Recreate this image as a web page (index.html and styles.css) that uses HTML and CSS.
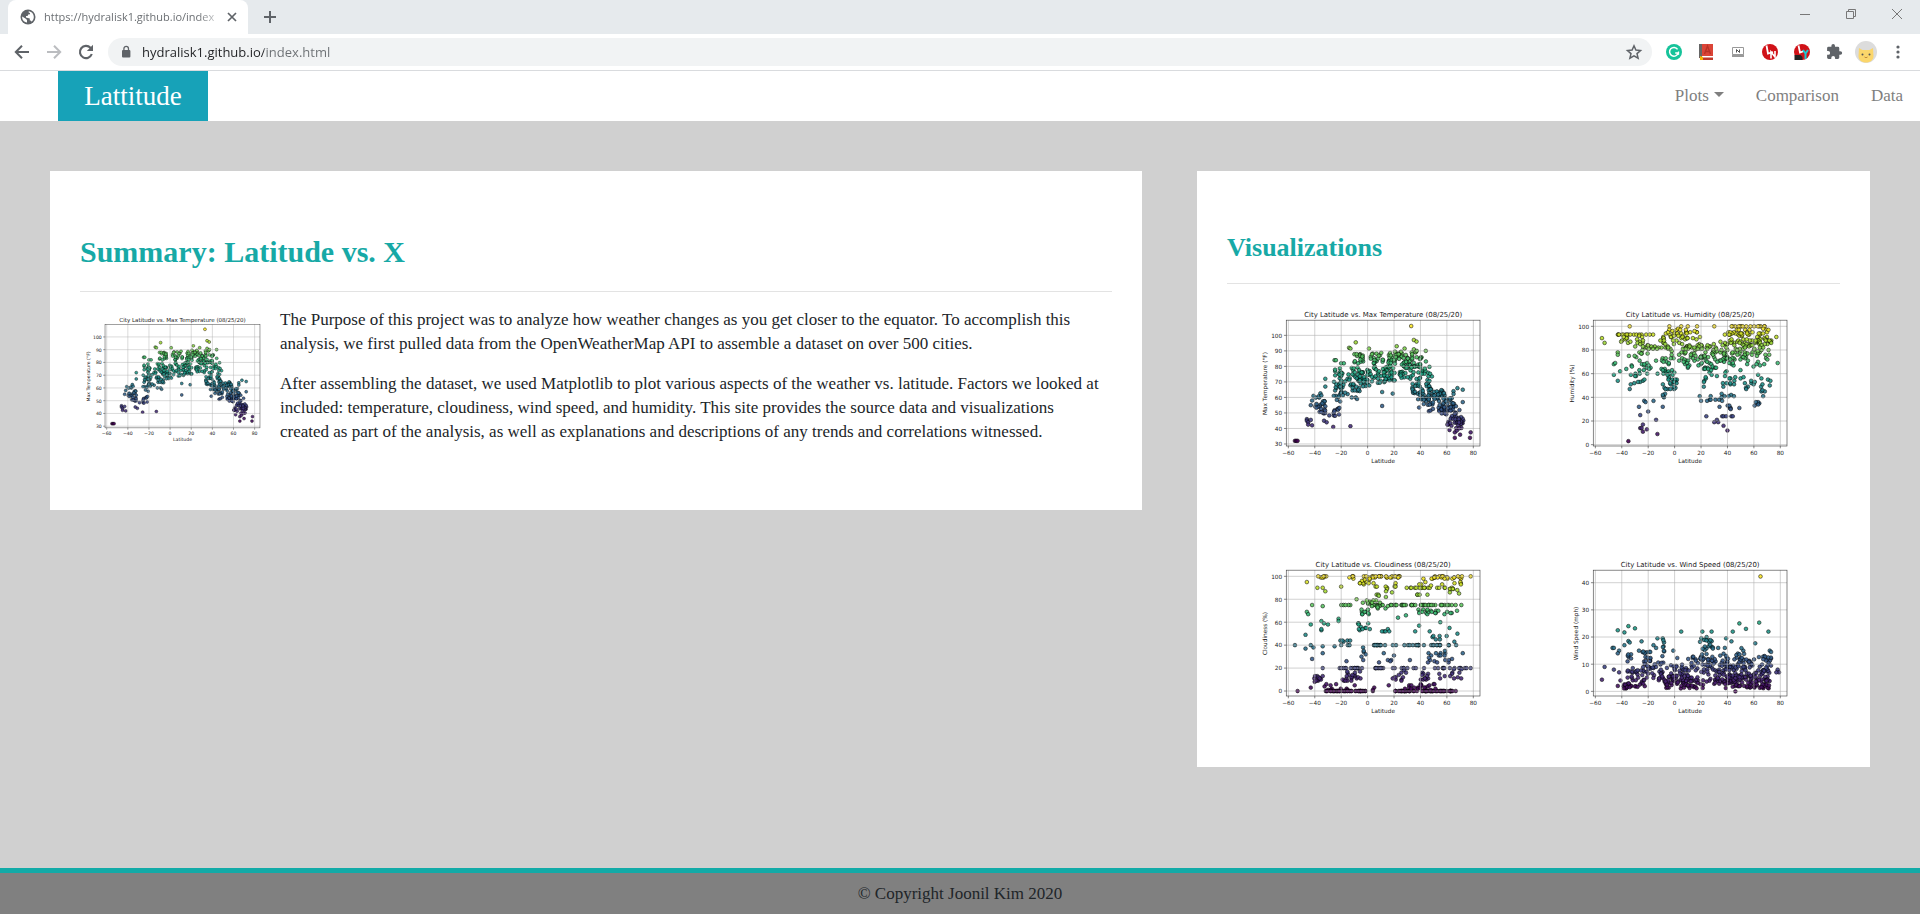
FILE: index.html
```html
<!DOCTYPE html>
<html lang="en">
<head>
<meta charset="utf-8">
<title>Latitude</title>
<link rel="stylesheet" href="styles.css">
</head>
<body>
<div class="browser">
  <div class="tabstrip">
    <div class="tab">
      <svg class="globe" viewBox="0 0 16 16"><circle cx="8" cy="8" r="7.5" fill="#5f6368"/><path d="M2.2 7.6 5.8 9.8 7 11v2.6C3.800 13.200 1.900 10.700 2.200 7.600zM8.700 2.200C12 2.600 14 5.200 13.800 8.500c-.2 1.800-1 3.200-2.200 4.200-.2-1-.8-1.200-1.800-1.300V9.400L6 8.600V7h1.600L8.200 5.600 10 5.200V4L8.700 3.600z" fill="#fff"/></svg>
      <span class="tab-title">https://hydralisk1.github.io/index</span>
      <button class="icon-btn small" aria-label="Close tab"><svg viewBox="0 0 14 14"><path d="M3 3l8 8M11 3l-8 8" stroke="#5f6368" stroke-width="1.7" fill="none"/></svg></button>
    </div>
    <button class="icon-btn newtab" aria-label="New tab"><svg viewBox="0 0 20 20"><path d="M10 4v12M4 10h12" stroke="#5f6368" stroke-width="2" fill="none"/></svg></button>
    <div class="window-controls">
      <button class="icon-btn" aria-label="Minimize"><svg viewBox="0 0 20 20"><path d="M5 10.500h10" stroke="#777" fill="none"/></svg></button>
      <button class="icon-btn" aria-label="Restore"><svg viewBox="0 0 20 20"><path d="M5.500 7.500h7v7h-7zM7.500 7.500v-2h7v7h-2" stroke="#777" fill="none"/></svg></button>
      <button class="icon-btn" aria-label="Close"><svg viewBox="0 0 20 20"><path d="M5 5l10 10M15 5L5 15" stroke="#777" fill="none"/></svg></button>
    </div>
  </div>
  <div class="toolbar">
    <button class="icon-btn" aria-label="Back"><svg viewBox="0 0 20 20"><path d="M17 10H4.500M10 3.800 3.800 10l6.200 6.200" stroke="#5f6368" stroke-width="2" fill="none"/></svg></button>
    <button class="icon-btn" aria-label="Forward"><svg viewBox="0 0 20 20"><path d="M3 10h12.500M10 3.800l6.200 6.200-6.200 6.200" stroke="#bbbdc0" stroke-width="2" fill="none"/></svg></button>
    <button class="icon-btn" aria-label="Reload"><svg viewBox="0 0 20 20"><path d="M15.800 12a6.100 6.100 0 1 1-1.300-6.200l1.200 1.200" stroke="#5f6368" stroke-width="2.100" fill="none"/><path d="M17 2.800v6.200h-6.200z" fill="#5f6368"/></svg></button>
    <div class="omnibox">
      <svg class="lock" viewBox="0 0 12 14"><rect x="2" y="5" width="8.400" height="7.500" rx="1" fill="#5f6368"/><path d="M3.900 5.500V3.700a2.300 2.300 0 0 1 4.600 0v1.800" stroke="#5f6368" stroke-width="1.300" fill="none"/></svg>
      <input class="url" type="text" aria-label="Address" value="hydralisk1.github.io/index.html">
      <button class="icon-btn" aria-label="Bookmark"><svg viewBox="0 0 20 20"><path d="M10 3.800l1.900 4.300 4.600.4-3.500 3.100 1.100 4.600L10 13.800l-4.100 2.400L7 11.600 3.500 8.500l4.600-.4z" stroke="#5f6368" stroke-width="1.500" fill="none"/></svg></button>
    </div>
    <button class="icon-btn" aria-label="Writing assistant"><svg viewBox="0 0 20 20"><circle cx="10" cy="10" r="8" fill="#15c39a"/><path d="M13.600 7.300A4.400 4.400 0 1 0 14.200 11h-3" stroke="#fff" stroke-width="1.500" fill="none"/><path d="M14.500 9.500v3.300" stroke="#fff" stroke-width="1.300"/></svg></button>
    <button class="icon-btn" aria-label="Dictionary"><svg viewBox="0 0 20 20"><path d="M3 2h3v14H3z" fill="#666"/><path d="M6 2h11v12H6z" fill="#db4437"/><path d="M6 14h11v1H6z" fill="#fff"/><path d="M3.500 15.500H17V18H5z" fill="#c0392b"/><path d="M8.500 12l3-8 3 8M9.500 9.500h4" stroke="#b93226" stroke-width="1.400" fill="none"/><path d="M4 14l3 1v3H4z" fill="#f4b400"/></svg></button>
    <button class="icon-btn" aria-label="Keyboard"><svg viewBox="0 0 20 20"><path d="M4.500 5.500h11v7h-11z" stroke="#999" fill="#fff"/><path d="M4 12.500h12v2.500H4z" fill="#999"/><path d="M8.500 10.500V7.500l3 3V7.500" stroke="#555" fill="none"/></svg></button>
    <button class="icon-btn" aria-label="Language tool"><svg viewBox="0 0 20 20"><circle cx="10" cy="10" r="8" fill="#d01218"/><path d="M6.500 3.500l1.500 8 5-1.500" stroke="#fff" stroke-width="1.800" fill="none"/><path d="M11 16.500V10l4 5V9" stroke="#fff" stroke-width="1.600" fill="none"/></svg></button>
    <button class="icon-btn" aria-label="Language video tool"><svg viewBox="0 0 20 20"><circle cx="10" cy="10" r="8" fill="#d01218"/><path d="M6.500 3.500l1.500 7 4-1.500" stroke="#fff" stroke-width="1.800" fill="none"/><path d="M2.500 13h6l2 2v3H2.500z" fill="#222"/><path d="M11 8l2.500 3.500L16 8M13.500 11.500V17" stroke="#19c8cf" stroke-width="2" fill="none"/></svg></button>
    <button class="icon-btn" aria-label="Extensions"><svg viewBox="0 0 24 24"><path d="M20.500 11H19V7a2 2 0 0 0-2-2h-4V3.500a2.500 2.500 0 0 0-5 0V5H4a2 2 0 0 0-2 2v3.800h1.500a2.700 2.700 0 0 1 0 5.400H2V20a2 2 0 0 0 2 2h3.800v-1.500a2.700 2.700 0 0 1 5.400 0V22H17a2 2 0 0 0 2-2v-4h1.500a2.500 2.500 0 0 0 0-5z" transform="translate(2 1.500) scale(.86)" fill="#5f6368"/></svg></button>
    <button class="icon-btn avatar" aria-label="Profile"><svg viewBox="0 0 22 22"><circle cx="11" cy="11" r="11" fill="#dcdcdc"/><path d="M4 7l3.500 2h7L18 7l.5 8c0 4-3 6.500-7.500 6.500S3.500 19 3.500 15z" fill="#fbd66b"/><circle cx="7.500" cy="13.500" r="1" fill="#555"/><circle cx="14.500" cy="13.500" r="1" fill="#555"/><path d="M9.500 16q1.500 1.500 3 0" stroke="#c0893a" fill="none"/></svg></button>
    <button class="icon-btn" aria-label="Menu"><svg viewBox="0 0 20 20"><g fill="#5f6368"><circle cx="10" cy="5" r="1.600"/><circle cx="10" cy="10" r="1.600"/><circle cx="10" cy="15" r="1.600"/></g></svg></button>
  </div>
</div>

<nav class="navbar">
  <a class="brand" href="#">Lattitude</a>
  <div class="links">
    <button class="nav-link dropdown">Plots</button>
    <a class="nav-link" href="#">Comparison</a>
    <a class="nav-link" href="#">Data</a>
  </div>
</nav>

<main class="content">
  <section class="card">
    <h1 class="title">Summary: Latitude vs. X</h1>
    <hr class="rule">
    <div class="summary">
      <svg class="chart thumb" data-chart="temperature" viewBox="0 0 432 296"></svg>
      <div class="text">
        <p>The Purpose of this project was to analyze how weather changes as you get closer to the equator. To accomplish this<br>analysis, we first pulled data from the OpenWeatherMap API to assemble a dataset on over 500 cities.</p>
        <p>After assembling the dataset, we used Matplotlib to plot various aspects of the weather vs. latitude. Factors we looked at<br>included: temperature, cloudiness, wind speed, and humidity. This site provides the source data and visualizations<br>created as part of the analysis, as well as explanations and descriptions of any trends and correlations witnessed.</p>
      </div>
    </div>
  </section>
  <section class="card">
    <h2 class="subtitle">Visualizations</h2>
    <hr class="rule">
    <div class="gallery">
      <a href="#"><svg class="chart" data-chart="temperature" viewBox="0 0 432 288"></svg></a>
      <a href="#"><svg class="chart" data-chart="humidity" viewBox="0 0 432 288"></svg></a>
      <a href="#"><svg class="chart" data-chart="cloudiness" viewBox="0 0 432 288"></svg></a>
      <a href="#"><svg class="chart" data-chart="wind" viewBox="0 0 432 288"></svg></a>
    </div>
  </section>
</main>

<footer class="footer">© Copyright Joonil Kim 2020</footer>
<script src="charts.js"></script>
</body>
</html>
```

FILE: styles.css
```css
* { box-sizing: border-box; }
body {
  margin: 0;
  min-height: 100vh;
  display: flex;
  flex-direction: column;
  background: #d0d0d0;
  color: #212529;
  font-family: "Liberation Serif", serif;
  font-size: 17px;
  line-height: 24px;
}
button { font: inherit; color: inherit; border: 0; padding: 0; background: none; }
a { color: inherit; text-decoration: none; }
svg { display: block; }

.browser { font-family: "Open Sans", sans-serif; }
.tabstrip { display: flex; align-items: flex-start; height: 34px; padding-left: 8px; background: #e6eaed; }
.tab {
  display: flex;
  align-items: center;
  width: 240px;
  height: 34px;
  padding: 0 9px 0 12px;
  background: #fff;
  border-radius: 8px 8px 0 0;
}
.globe { width: 16px; height: 16px; margin-right: 8px; flex: none; }
.tab-title {
  flex: 1;
  white-space: nowrap;
  font-size: 11px;
  color: #6b6f73;
  -webkit-mask-image: linear-gradient(to right, #000 85%, transparent);
  mask-image: linear-gradient(to right, #000 85%, transparent);
}
.icon-btn { width: 20px; height: 20px; flex: none; }
.icon-btn svg { width: 100%; height: 100%; }
.icon-btn.small { width: 14px; height: 14px; }
.newtab { margin: 7px 0 0 12px; }
.window-controls { display: flex; gap: 26px; margin: 4px 13px 0 auto; }
.toolbar {
  display: flex;
  align-items: center;
  gap: 12px;
  height: 37px;
  padding: 0 12px;
  background: #fff;
  border-bottom: 1px solid #d9dbde;
}
.omnibox {
  display: flex;
  align-items: center;
  flex: 1;
  height: 28px;
  padding: 0 8px 0 12px;
  border-radius: 14px;
  background: #f1f3f4;
}
.lock { width: 12px; height: 14px; margin-right: 10px; }
.url {
  flex: 1;
  height: 24px;
  padding: 0;
  border: 0;
  outline: 0;
  font: 13px "Open Sans", sans-serif;
  color: transparent;
  background: linear-gradient(to right, #202124 122px, #6b6f73 122px);
  -webkit-background-clip: text;
  background-clip: text;
}
.avatar { width: 22px; height: 22px; margin: 0 -1px; }

.navbar { display: flex; align-items: center; height: 50px; padding: 0 17px 0 58px; background: #fff; }
.brand {
  width: 150px;
  text-align: center;
  background: #17a2b8;
  color: #fff;
  font-size: 27px;
  line-height: 50px;
}
.links { display: flex; gap: 32px; margin-left: auto; color: #7f7f7f; }
.nav-link { line-height: 24px; }
.dropdown::after {
  content: "";
  display: inline-block;
  margin-left: 5px;
  vertical-align: 4px;
  border: 5px solid transparent;
  border-top-color: currentColor;
  border-bottom: 0;
}

.content {
  flex: 1;
  display: grid;
  grid-template-columns: 1092fr 673fr;
  align-items: start;
  gap: 55px;
  padding: 50px 50px 100px;
}
.card { background: #fff; padding: 61px 30px 50px; }
.title, .subtitle { margin: 0 0 20px; color: #17a9a6; }
.title { font-size: 30px; line-height: 39px; }
.subtitle { font-size: 26px; line-height: 31px; }
.rule { margin: 0 0 16px; border: 0; border-top: 1px solid #e3e3e3; }
.summary { display: flex; }
.thumb { flex: none; width: 200px; height: 137px; }
.text p { margin: 0 0 16px; }
.gallery { display: grid; grid-template-columns: 1fr 1fr; row-gap: 83px; justify-items: center; }
.gallery .chart { width: 250px; height: 167px; }
.chart text { font-family: "DejaVu Sans", sans-serif; font-size: 10px; fill: #222; }
.chart .chart-title { font-size: 12px; }
.chart circle { stroke: #000; stroke-width: 1; opacity: .9; }
.chart .grid { stroke: #b0b0b0; stroke-width: 1; }
.chart .frame { fill: none; stroke: #333; stroke-width: 1; }

.footer {
  border-top: 5px solid #12aaa7;
  background: #808080;
  text-align: center;
  line-height: 24px;
  padding: 9px 0 8px;
}
```

FILE: charts.js
```js
const NS = "http://www.w3.org/2000/svg";
const VIRIDIS = [[68,1,84],[72,40,120],[62,74,137],[49,104,142],[38,130,142],[31,158,137],[53,183,121],[109,205,89],[180,222,44],[253,231,37]];
const DENSITY = 0.72;

function random(seed) {
  return () => {
    seed = (seed * 1664525 + 1013904223) >>> 0;
    return seed / 4294967296;
  };
}

function color(t) {
  const p = Math.max(0, Math.min(1, t)) * 9;
  const i = Math.min(8, Math.floor(p));
  return "rgb(" + VIRIDIS[i].map((c, k) => Math.round(c + (VIRIDIS[i + 1][k] - c) * (p - i))) + ")";
}

// Each band is [latFrom, latTo, low, high, count].
function fill(points, bands, seed, round) {
  const r = random(seed);
  for (const [a, b, lo, hi, n] of bands)
    for (let i = 0; i < n * DENSITY; i++) {
      const v = lo + r() * (hi - lo);
      points.push([a + r() * (b - a), round ? Math.round(v) : v]);
    }
  return points;
}

const charts = {
  temperature: {
    title: "Max Temperature", label: "Max Temperature (°F)", ticks: [30,40,50,60,70,80,90,100],
    y0: 30, p0: 248.5, y1: 100, p1: 60.8, min: 32, max: 106,
    points: fill([[33,106],[35,97],[37,96],[-9,95.500],[-14,92],[-13,91.500],[1,91.500],[22,93],[28,91.500],[35,91],[44,90],[-55,32],[-54,32],[-53,32],[-46,46],[-46,45],[-45,44],[-45,42.500],[-43,45.500],[-42,42],[-43,55],[-42,58],[-41,61],[-33,45],[-31,44],[-26,41],[-13,41.500],[-9,60],[-8,59],[-12,60],[11,54.500],[11,63.500],[19,62.500],[39,53.500],[-32,72],[-32,67],[-25,84],[-24,84],[-20,82],[-18,82],[66,37.500],[66,34],[70,36],[62,39],[78,37.500],[77.500,34],[72,65],[72,57],[68,66],[65,64]],
      [[-40,-32,49,63,36],[-29,-21,47,55,14],[-26,-19,56,80,34],[-22,-13,60,76,26],[-14,-6,64,80,34],[-10,-3,82,88,26],[-8,3,67,78,48],[2,12,82,90,26],[3,13,68,80,26],[12,21,70,80,38],[15,26,79,90,36],[20,34,80,88,40],[24,34,72,80,26],[33,40,62,90,50],[38,49,66,86,44],[38,48,55,66,28],[46,57,51,66,65],[56,67,49,63,60],[60,73,41,48,42],[67,71,38,52,12]], 7)
  },
  humidity: {
    title: "Humidity", label: "Humidity (%)", ticks: [0,20,40,60,80,100],
    y0: 0, p0: 249.7, y1: 100, p1: 45.200, min: 3, max: 100,
    points: fill([[-55,90],[-53,86],[-43,78],[-43,76],[-46,68],[-45,69],[-46,59],[-43,54],[-34,100],[-4,100],[5,100],[10,100],[17,100],[30,100],[-35,3],[-13,9],[-14,21],[-20,28],[-24,17],[-26,14],[-25,14],[-24,11],[-21,13],[-26,25],[-27,32],[-23,37],[-22,36],[-16,37],[-9,32],[-34,47],[40,12],[37,16],[33,19],[32,21],[30,19],[24,24],[36,24],[37,24],[39,24],[43,24],[44,24],[34,32],[49,31],[78,69],[77,91],[20,37],[19,41],[67,41],[72,50]],
      [[40,72,100,100,20],[-43,-15,93,93,22],[-42,-20,86,92,20],[-7,18,93,98,28],[37,60,92,97,36],[62,71,90,99,16],[-12,20,86,92,32],[33,74,85,89,56],[-30,0,77,85,42],[5,40,77,85,70],[42,72,76,86,50],[-10,40,70,77,60],[38,72,65,77,38],[-42,-20,58,75,22],[-20,0,60,72,22],[0,36,65,70,24],[-9,2,46,63,34],[-35,-18,50,62,14],[20,50,49,65,40],[50,73,44,60,24],[24,48,37,43,18],[-10,-6,40,50,8],[60,66,33,37,8],[40,43,30,33,6]], 21, true)
  },
  cloudiness: {
    title: "Cloudiness", label: "Cloudiness (%)", ticks: [0,20,40,60,80,100],
    y0: 0, p0: 243.4, y1: 100, p1: 45.200, min: 0, max: 100,
    points: fill([[-46,95],[-38,90],[-34,90],[-32,87],[-20,91],[-42,75],[-34,74],[-46,69],[-45,67],[-43,58],[-35,61],[-33,59],[-30,58],[-35,53],[-35,54],[-47,49],[-55,40],[-43,40],[-41,38],[-47,37],[-34,39],[-34,33],[-42,28],[-34,20],[-43,3],[-53,0],[-22,63],[-22,61],[-25,39],[-20,40],[-15,40],[-16,26],[32,27],[72,33],[78,20],[78,100],[4,0],[5,3],[4,1],[16,5],[23,64],[29,66],[39,57],[55,60],[62,55],[68,50],[36,52],[47,52]],
      [[-39,-31,99,100,9],[-15,-10,98,100,6],[-3,26,99,100,34],[42,74,98,100,36],[-6,5,91,98,16],[6,23,89,95,12],[29,60,90,90,22],[36,72,91,95,12],[60,72,84,91,10],[4,22,82,87,8],[37,47,84,84,5],[-10,2,75,80,8],[-21,-13,75,75,6],[3,72,75,75,64],[2,18,71,79,16],[37,68,67,71,28],[-6,1,64,73,12],[-10,2,52,60,14],[10,20,50,54,6],[48,66,43,49,9],[-25,-5,40,45,8],[2,70,40,40,46],[-5,0,26,38,8],[5,20,25,35,8],[45,66,24,36,24],[-24,-1,20,20,20],[5,13,20,20,11],[18,78,20,20,30],[-41,-33,8,14,16],[-19,-5,8,17,28],[19,30,8,18,14],[40,46,9,16,14],[54,72,10,19,16],[-33,-3,1,6,15],[-32,-1,0,0,56],[20,68,0,0,84],[26,53,1,6,28]], 35, true)
  },
  wind: {
    title: "Wind Speed", label: "Wind Speed (mph)", ticks: [0,10,20,30,40],
    y0: 0, p0: 244, y1: 40, p1: 56.200, min: 0, max: 42,
    points: fill([[65,42.300],[-43,22.500],[-38,21.700],[-35,24],[-30,23.200],[5,22],[21,22],[28,22],[44,22],[49,25],[54,23],[64,25.300],[71,22],[-47,16],[-46,16],[-38,17],[-35,18.500],[-34,18],[-25,18.400],[-27,15],[-42,15],[-43,14],[-16,17],[-14,16],[-13,19.500],[-9,19.500],[-8,18],[-1,15],[2,12.300],[39,19.500],[43,18.400],[61,17.700],[33,16],[38,16],[52,15],[72,15],[73,14.500],[68,13],[-53,9],[-55,4.300],[-46,8],[-42,7],[-43,2],[-41,4],[78,8],[79,7],[77,7],[46,0]],
      [[-39,-31,1,5,22],[-36,-31,5,9,12],[-36,-32,11,14,7],[-30,-20,1,8,32],[-25,-18,8,15,34],[-17,-8,4,12,28],[-10,-7,12,19,8],[-12,10,1,6,66],[-8,10,5,10,36],[8,22,1,5,36],[10,23,5,13,36],[19,25,12,20,16],[24,29,15,19,13],[22,34,5,13,34],[24,34,2,5,16],[33,47,3,10,66],[34,48,9,14,24],[38,60,1,6,66],[48,60,5,12,46],[49,53,11,16,8],[60,72,1,8,74],[60,73,7,13,26]], 49)
  }
};

function add(svg, tag, attrs, text) {
  const el = document.createElementNS(NS, tag);
  for (const k in attrs) el.setAttribute(k, attrs[k]);
  if (text !== undefined) el.textContent = text;
  svg.appendChild(el);
}

document.querySelectorAll(".chart").forEach(svg => {
  const c = charts[svg.dataset.chart];
  const h = svg.viewBox.baseVal.height;
  const k = h / 288;
  const left = 54, right = 388.8, top = 34.56 * k, bottom = 252 * k;
  const X = v => 194.6 + v * 2.283;
  const Y = v => (c.p0 + (v - c.y0) * (c.p1 - c.p0) / (c.y1 - c.y0)) * k;
  svg.setAttribute("role", "img");
  svg.setAttribute("aria-label", "City Latitude vs. " + c.title);
  for (const [x, v] of c.points)
    add(svg, "circle", { cx: X(x).toFixed(1), cy: Y(v).toFixed(1), r: 3.2, fill: color((v - c.min) / (c.max - c.min)) });
  for (let x = -60; x <= 80; x += 20) {
    add(svg, "path", { class: "grid", d: `M${X(x)} ${top}V${bottom}` });
    add(svg, "path", { class: "frame", d: `M${X(x)} ${bottom}v4` });
    add(svg, "text", { x: X(x), y: bottom + 15, "text-anchor": "middle" }, String(x).replace("-", "−"));
  }
  for (const v of c.ticks) {
    add(svg, "path", { class: "grid", d: `M${left} ${Y(v)}H${right}` });
    add(svg, "path", { class: "frame", d: `M${left} ${Y(v)}h-4` });
    add(svg, "text", { x: left - 7, y: Y(v) + 4, "text-anchor": "end" }, v);
  }
  add(svg, "rect", { class: "frame", x: left, y: top, width: right - left, height: bottom - top });
  add(svg, "text", { class: "chart-title", x: 221.4, y: top - 6, "text-anchor": "middle" }, `City Latitude vs. ${c.title} (08/25/20)`);
  add(svg, "text", { x: 221.4, y: bottom + 29, "text-anchor": "middle" }, "Latitude");
  const lx = c.ticks[c.ticks.length - 1] === 100 ? 21 : 27;
  add(svg, "text", { x: lx, y: h / 2, "text-anchor": "middle", transform: `rotate(-90 ${lx} ${h / 2})` }, c.label);
});
```
